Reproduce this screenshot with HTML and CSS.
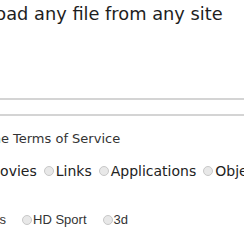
FILE: index.html
```html
<!DOCTYPE html>
<html lang="en">
<head>
    <meta charset="UTF-8">
    <title>Download any file from any site</title>
    <link rel="stylesheet" href="styles.css">
</head>
<body>
    <div class="page">
        <h1 class="title">Download any file from any site</h1>

        <div class="search"></div>

        <p class="terms">I agree to the Terms of Service</p>

        <div class="options types">
            <span class="first">Movies</span>
            <label class="option"><span class="radio"></span>Links</label>
            <label class="option"><span class="radio"></span>Applications</label>
            <label class="option"><span class="radio"></span>Objects</label>
        </div>

        <div class="options extras">
            <span class="first">Shows</span>
            <label class="option"><span class="radio"></span>HD Sport</label>
            <label class="option"><span class="radio"></span>3d</label>
        </div>
    </div>
</body>
</html>
```

FILE: styles.css
```css
body {
    margin: 0;
    font-family: "DejaVu Sans", Verdana, sans-serif;
    color: #222;
    background: #fff;
    overflow: hidden;
}

.page {
    width: 244px;
    padding-top: 4px;
    overflow: hidden;
}

.title {
    margin: 0 0 0 -60px;
    font-size: 17.8px;
    font-weight: normal;
    line-height: 20px;
    white-space: nowrap;
    color: #1e1e1e;
}

.search {
    margin: 74px 0 0 -20px;
    height: 14px;
    border-top: 2px solid #d4d4d4;
    border-bottom: 2px solid #d4d4d4;
}

.terms {
    margin: 15px 0 0 -79px;
    font-size: 13px;
    line-height: 16px;
    white-space: nowrap;
    color: #333;
}

.options {
    display: flex;
    align-items: center;
    white-space: nowrap;
    line-height: 16px;
}

.option {
    display: flex;
    align-items: center;
}

.radio {
    display: inline-block;
    width: 8px;
    height: 8px;
    border: 1px solid #c8c8c8;
    border-radius: 50%;
    background: #e8e8e8;
}

.types {
    margin-top: 16px;
    font-size: 14px;
}

.types .first {
    margin-left: -12px;
}

.types .option {
    margin-left: 7px;
}

.types .radio {
    margin-right: 2px;
}

.extras {
    margin-top: 33px;
    font-family: "Liberation Sans", Arial, sans-serif;
    font-size: 13px;
    color: #333;
}

.extras .first {
    margin-left: -33px;
}

.extras .option {
    margin-left: 16px;
}

.extras .radio {
    margin-right: 1px;
}
```
